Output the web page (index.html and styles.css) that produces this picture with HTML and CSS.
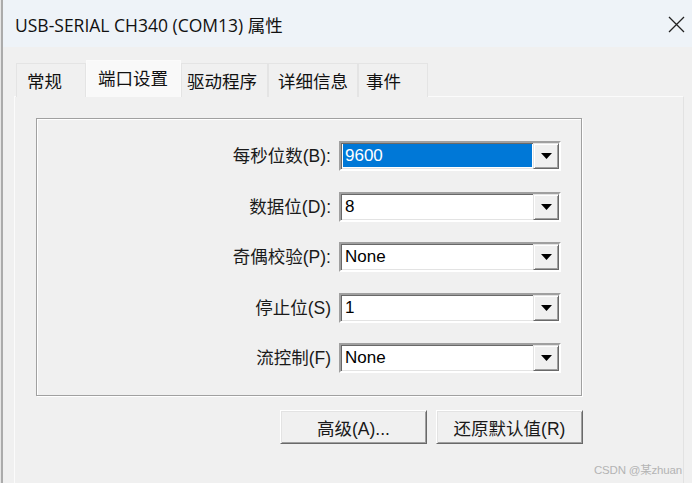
FILE: index.html
```html
<!DOCTYPE html>
<html lang="zh-CN">
<head>
<meta charset="utf-8">
<title>USB-SERIAL CH340 (COM13) 属性</title>
<link rel="stylesheet" href="styles.css">
</head>
<body>
<div class="edge"></div>
<div class="dialog">
  <div class="titlebar">
    <span class="title">USB-SERIAL CH340 (COM13) 属性</span>
    <svg class="close" width="17" height="17" viewBox="0 0 17 17"><path d="M1 1 L16 16 M16 1 L1 16" stroke="#222" stroke-width="1.3" fill="none"/></svg>
  </div>
  <div class="content">
    <div class="tabs">
      <div class="tab t1">常规</div>
      <div class="tab sel t2">端口设置</div>
      <div class="tab t3">驱动程序</div>
      <div class="tab t4">详细信息</div>
      <div class="tab t5">事件</div>
    </div>
    <div class="panel">
      <div class="group">
        <div class="label">每秒位数(B):</div>
        <div class="combo"><span class="val hl">9600</span><span class="drop"><svg width="11" height="6" viewBox="0 0 11 6"><polygon points="0,0 11,0 5.5,6" fill="#000"/></svg></span></div>
        <div class="label">数据位(D):</div>
        <div class="combo"><span class="val">8</span><span class="drop"><svg width="11" height="6" viewBox="0 0 11 6"><polygon points="0,0 11,0 5.5,6" fill="#000"/></svg></span></div>
        <div class="label">奇偶校验(P):</div>
        <div class="combo"><span class="val">None</span><span class="drop"><svg width="11" height="6" viewBox="0 0 11 6"><polygon points="0,0 11,0 5.5,6" fill="#000"/></svg></span></div>
        <div class="label">停止位(S)</div>
        <div class="combo"><span class="val">1</span><span class="drop"><svg width="11" height="6" viewBox="0 0 11 6"><polygon points="0,0 11,0 5.5,6" fill="#000"/></svg></span></div>
        <div class="label">流控制(F)</div>
        <div class="combo"><span class="val">None</span><span class="drop"><svg width="11" height="6" viewBox="0 0 11 6"><polygon points="0,0 11,0 5.5,6" fill="#000"/></svg></span></div>
      </div>
      <div class="buttons">
        <button class="btn">高级(A)...</button>
        <button class="btn">还原默认值(R)</button>
      </div>
    </div>
  </div>
</div>
<div class="wm">CSDN @某zhuan</div>
</body>
</html>
```

FILE: styles.css
```css
html, body {
  margin: 0;
  padding: 0;
}
body {
  width: 692px;
  height: 483px;
  overflow: hidden;
  display: flex;
  background: #f0f0f0;
  font-family: "Liberation Sans", "Noto Sans CJK SC", sans-serif;
  color: #000;
  position: relative;
}
.edge {
  width: 1px;
  background: #e6e6e6;
  border-right: 2px solid #ababab;
}
.dialog {
  flex: 1;
  display: flex;
  flex-direction: column;
}
.titlebar {
  height: 47px;
  box-sizing: border-box;
  background: #eef3f8;
  display: flex;
  align-items: center;
  justify-content: space-between;
  padding: 2px 7px 0 12px;
}
.title {
  font-family: "Open Sans", "Noto Sans CJK SC", sans-serif;
  font-size: 17.5px;
  color: #111;
  white-space: nowrap;
}
.close {
  display: block;
}
.content {
  flex: 1;
  display: flex;
  flex-direction: column;
  padding: 14px 8px 0 11px;
}
.tabs {
  display: flex;
  align-items: flex-end;
  height: 36px;
  margin-left: 2px;
  margin-bottom: -1px;
  position: relative;
  z-index: 1;
}
.tab {
  box-sizing: border-box;
  height: 34px;
  border: 1px solid #e4e4e4;
  border-bottom: none;
  background: #f0f0f0;
  font-size: 17.5px;
  display: flex;
  align-items: center;
  color: #111;
}
.t1 { width: 70px; padding-left: 10px; }
.t2 { width: 95px; padding-left: 11px; }
.t3 { width: 87px; padding-left: 5px; }
.t4 { width: 90px; padding-left: 9px; }
.t5 { width: 70px; padding-left: 7px; }
.tab.sel {
  height: 37px;
  background: #f9f9f9;
  border-color: #fbfbfb;
  padding-bottom: 3px;
}
.panel {
  flex: 1;
  border: 1px solid #fbfbfb;
  border-right-color: #e2e2e2;
  border-bottom: none;
  background: #f0f0f0;
  padding: 21px 0 0 21px;
}
.group {
  box-sizing: border-box;
  width: 546px;
  height: 278px;
  border: 1px solid #a0a0a0;
  box-shadow: inset 1px 1px 0 #fff, 1px 1px 0 #fff;
  padding-top: 22px;
  display: grid;
  grid-template-columns: 294px 222px;
  grid-auto-rows: 30px;
  column-gap: 8px;
  row-gap: 20.5px;
  align-content: start;
}
.label {
  text-align: right;
  font-size: 17.5px;
  line-height: 31px;
  color: #1a1a1a;
  white-space: nowrap;
}
.combo {
  box-sizing: border-box;
  height: 30px;
  background: #fff;
  border: 2px solid;
  border-color: #a0a0a0 #fff #fff #a0a0a0;
  box-shadow: inset 1px 1px 0 #696969, inset -1px -1px 0 #e3e3e3;
  display: flex;
}
.val {
  flex: 1;
  margin: 1px 1px 2px 2px;
  padding-left: 2px;
  font-size: 17px;
  line-height: 24px;
  color: #000;
}
.val.hl {
  background: #0078d7;
  color: #fff;
}
.drop {
  box-sizing: border-box;
  width: 26px;
  background: #f0f0f0;
  border: 1px solid;
  border-color: #e3e3e3 #696969 #696969 #e3e3e3;
  box-shadow: inset 1px 1px 0 #fff, inset -1px -1px 0 #a0a0a0;
  display: flex;
  align-items: center;
  justify-content: center;
}
.drop svg {
  display: block;
}
.buttons {
  display: flex;
  gap: 9px;
  margin-top: 14px;
  margin-left: 244px;
}
.btn {
  box-sizing: border-box;
  width: 147px;
  height: 34px;
  margin: 0;
  padding: 0;
  background: #f0f0f0;
  border: 1px solid;
  border-color: #fff #696969 #696969 #fff;
  box-shadow: inset 1px 1px 0 #e3e3e3, inset -1px -1px 0 #a0a0a0;
  font-family: "Liberation Sans", "Noto Sans CJK SC", sans-serif;
  font-size: 17.5px;
  color: #1a1a1a;
}
.wm {
  position: absolute;
  left: 594px;
  top: 461px;
  font-size: 11.5px;
  letter-spacing: -0.2px;
  color: #b4b4b4;
  white-space: nowrap;
}
```
